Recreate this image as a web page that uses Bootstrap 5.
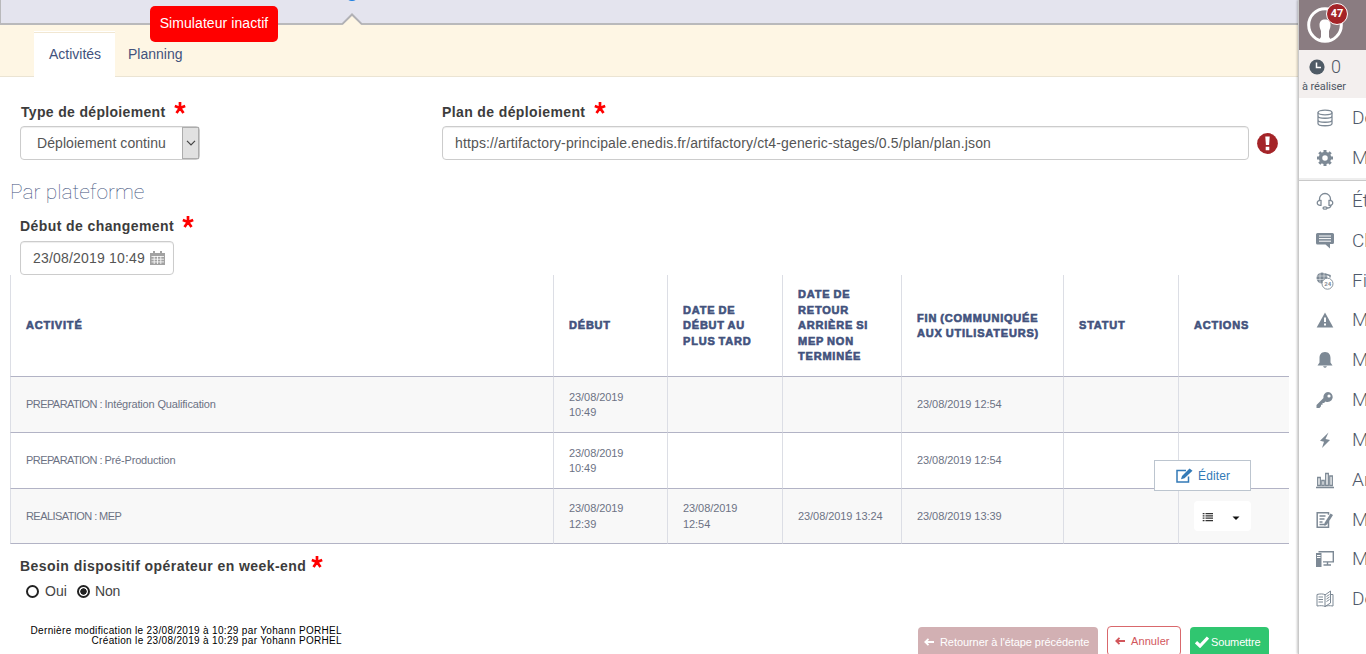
<!DOCTYPE html>
<html lang="fr">
<head>
<meta charset="utf-8">
<title>Activités</title>
<meta name="viewport" content="width=device-width, initial-scale=1">
<link href="https://cdn.jsdelivr.net/npm/bootstrap@5.3.0/dist/css/bootstrap.min.css" rel="stylesheet">
<style>
body{font-family:"Liberation Sans",Arial,sans-serif;font-size:14px;line-height:20px;color:#444;height:654px;background:#fff}
.main-pane{width:1298px;height:654px}
.top-strip{height:25px;background:#e4e4ee;border-left:1px solid #b9b9bb;border-bottom:2px solid #b9b9bb}
.step-arrow{left:342px;top:12px}
.step-dot{left:345px;top:-13px;width:14px;height:14px;background:#1a7de0}
.sim-badge{left:150px;top:6px;width:128px;height:36px;line-height:35px;background:#f00;color:#fff;border-radius:5px;letter-spacing:.07px;z-index:3}
.tab-band{height:52px;background:#fef6e4;border-bottom:1px solid #ebe4d3;padding:6px 0 0 34px}
.tab-band .nav-link{color:#42527d;padding:13px 13px 0;height:46px;border:0;border-radius:0;line-height:20px}
.tab-band .nav-link.active{background:#fff;padding:12px 15px 0;width:81px;border-top:1px solid #fff;box-shadow:inset 0 1px #f1e7d2}
.field-label{font-weight:700;color:#3c3c3c;line-height:20px;height:24px;white-space:nowrap}
.field-label svg{vertical-align:top}
.field-label path{stroke:red;stroke-width:2.7}
.box{height:34px;border:1px solid #ccc;border-radius:4px;box-shadow:inset 0 1px 1px rgba(0,0,0,.07);background:#fff;color:#555;line-height:32px;white-space:nowrap}
.select-btn{width:17px;background:#e1e1e1;border:1px solid #adadad}
.section-title{font-family:Roboto,sans-serif;font-weight:100;font-size:21px;line-height:24px;color:#42527d;margin:0}
.act-table{width:1279px;margin:0 0 0 10px;table-layout:fixed;border-collapse:separate;border-spacing:0;font-size:11px;line-height:15.4px;color:#6c7284}
.act-table th,.act-table td{padding:0 8px 0 15px;vertical-align:middle;border-left:1px solid #dcdee5;border-bottom:1px solid #b2b3c5}
.act-table th{height:102px;padding-top:1px;color:#42527d;font-weight:700;letter-spacing:.8px;word-spacing:-.8px;-webkit-text-stroke:.6px #42527d}
.act-table td{height:56px;letter-spacing:-.07px}
.act-table td:first-child{letter-spacing:-.17px}
.act-table .phase{letter-spacing:-.57px}
.act-table td:nth-child(2){padding-top:1px}
.act-table tr:last-child td{height:55px;padding-top:1px}
.act-table tbody tr:nth-child(odd){background:#f8f8f8}
.action-btn{width:57px;height:30px;background:#fff;border-radius:4px}
.edit-menu{right:47px;bottom:53px;width:97px;height:31px;background:#fff;border:1px solid #bcc5cf;color:#337ab7;font-size:12px}
.radio-dot{width:13px;height:13px;border:2px solid #222;border-radius:50%;display:inline-block}
.radio-dot.on{background:radial-gradient(circle,#222 0 2.9px,#fff 3.5px)}
.history{font-size:10px;line-height:10px;color:#000;width:342px;letter-spacing:.33px}
.foot-btn{height:30px;border-radius:4px;font-size:11px;line-height:28px;white-space:nowrap}
.side-pane{width:68px;height:654px;border-left:1px solid #c9c9c9;box-shadow:-1px 0 2px rgba(0,0,0,.22);font-family:Roboto,sans-serif;background:#fff;z-index:4}
.avatar-zone{height:50px;background:#8a7c81}
.counter{left:27px;top:3px;width:22px;height:22px;border:1.5px solid #fff;background:#a42428;color:#fff;font-size:11px;font-weight:700;line-height:19px}
.todo-zone{height:48px;background:#f3efee;color:#4f5865}
.side-item{height:40px;padding-left:17px;color:#505a6b;font-weight:300;font-size:19px;line-height:40px;white-space:nowrap}
.side-item svg{width:18px;height:18px;margin-right:18px;flex:none;fill:#7d8995;stroke:none}
.side-item .ln{fill:none;stroke:#7d8995}
.side-rule{height:3px;background:#eee;border-bottom:1px solid #c9c9c9}
</style>
</head>
<body class="overflow-hidden">
<div class="d-flex">
<main class="main-pane position-relative flex-shrink-0 overflow-hidden">
  <div class="top-strip"></div>
  <span class="step-dot rounded-circle position-absolute"></span>
  <svg class="step-arrow position-absolute" width="20" height="14"><path d="M0 13 L10 2.5 L20 13V14H0Z" fill="#fef6e4"/><path d="M0 12.3 L10 2.5 L20 12.3" fill="none" stroke="#b1b1b5" stroke-width="2"/></svg>
  <div class="sim-badge position-absolute text-center">Simulateur inactif</div>
  <nav class="tab-band nav flex-nowrap">
    <a class="nav-link active">Activités</a>
    <a class="nav-link">Planning</a>
  </nav>

  <div class="d-flex" style="padding:25px 0 0 20px">
    <div style="width:422px">
      <div class="field-label" style="letter-spacing:.33px;padding-left:1px">Type de déploiement <svg width="12" height="13" viewBox="0 0 12 13" style="margin-left:4px"><path d="M6 0V6M6 6L.8 4M6 6L11.2 4M6 6L2.5 11M6 6L9.5 11"/></svg></div>
      <div class="box d-flex" style="width:180px;padding-left:16px">
        <span class="flex-grow-1" style="letter-spacing:.07px">Déploiement continu</span>
        <span class="select-btn d-flex align-items-center justify-content-center"><svg width="10" height="6"><path d="M1 .8L5 4.8L9 .8" fill="none" stroke="#444" stroke-width="1.2"/></svg></span>
      </div>
    </div>
    <div>
      <div class="field-label" style="letter-spacing:.38px">Plan de déploiement <svg width="12" height="13" viewBox="0 0 12 13" style="margin-left:4px"><path d="M6 0V6M6 6L.8 4M6 6L11.2 4M6 6L2.5 11M6 6L9.5 11"/></svg></div>
      <div class="d-flex align-items-center">
        <div class="box" style="width:807px;padding-left:12px;letter-spacing:.137px">https://artifactory-principale.enedis.fr/artifactory/ct4-generic-stages/0.5/plan/plan.json</div>
        <svg width="21" height="21" viewBox="0 0 21 21" style="margin-left:8px"><circle cx="10.5" cy="10.5" r="10.4" fill="#a42428"/><path d="M8.3 3.5h4.4l-.6 8.5H8.9zM8.7 13.8h3.6v3.4H8.7z" fill="#fff"/></svg>
      </div>
    </div>
  </div>

  <h2 class="section-title" style="padding:20px 0 12px 10px">Par plateforme</h2>
  <div style="padding-left:20px">
    <div class="field-label" style="height:25px;letter-spacing:.41px">Début de changement <svg width="12" height="13" viewBox="0 0 12 13" style="margin-left:4px"><path d="M6 0V6M6 6L.8 4M6 6L11.2 4M6 6L2.5 11M6 6L9.5 11"/></svg></div>
    <div class="box d-flex align-items-center" style="width:154px;padding-left:12px"><span style="letter-spacing:.19px">23/08/2019 10:49</span>
      <svg width="15" height="14" viewBox="0 0 15 14" style="margin-left:5px;margin-bottom:1px"><path d="M0 2h15v12H0zM3 0h2v3H3zM10 0h2v3h-2z" fill="#a2a2a2"/><path d="M1.5 5.5H14M1.5 8.2H14M1.5 10.9H14M4.2 5v8M7.5 5v8M10.8 5v8" stroke="#fff" stroke-width=".8"/></svg>
    </div>
  </div>

  <div class="position-relative">
    <table class="act-table">
      <colgroup><col style="width:543px"><col style="width:114px"><col style="width:115px"><col style="width:119px"><col style="width:162px"><col style="width:115px"><col style="width:111px"></colgroup>
      <thead><tr><th>ACTIVITÉ</th><th>DÉBUT</th><th>DATE DE<br>DÉBUT AU<br>PLUS TARD</th><th>DATE DE<br>RETOUR<br>ARRIÈRE SI<br>MEP NON<br>TERMINÉE</th><th>FIN (COMMUNIQUÉE<br>AUX UTILISATEURS)</th><th>STATUT</th><th>ACTIONS</th></tr></thead>
      <tbody>
        <tr><td><span class="phase">PREPARATION : </span>Intégration Qualification</td><td>23/08/2019<br>10:49</td><td></td><td></td><td>23/08/2019 12:54</td><td></td><td></td></tr>
        <tr><td><span class="phase">PREPARATION : </span>Pré-Production</td><td>23/08/2019<br>10:49</td><td></td><td></td><td>23/08/2019 12:54</td><td></td><td></td></tr>
        <tr><td><span class="phase">REALISATION : MEP</span></td><td>23/08/2019<br>12:39</td><td>23/08/2019<br>12:54</td><td>23/08/2019 13:24</td><td>23/08/2019 13:39</td><td></td>
          <td class="pt-0"><div class="action-btn"><svg class="d-block" width="57" height="30"><path d="M11.5 12.500h7.500M11.500 14.800h7.500M11.500 17.200h7.500M11.500 19.500h7.500M8.700 12.500h1.800M8.700 14.800h1.800M8.700 17.200h1.800M8.700 19.500h1.800" stroke="#333" stroke-width="1.250"/><path d="M38.500 15.500h7l-3.500 3.500z" fill="#111"/></svg></div></td></tr>
      </tbody>
    </table>
    <div class="edit-menu position-absolute d-flex align-items-center" style="padding-left:21px">
      <svg width="17" height="15" viewBox="0 0 17 15"><path d="M12.500 8.500V14H1V2.500H10" fill="none" stroke="#337ab7" stroke-width="1.500"/><path d="M5 11.200L6 8L13.500.5L16.500 2.800L8.500 10.300Z" fill="#337ab7"/></svg>
      <span style="margin-left:5px;letter-spacing:.15px">Éditer</span>
    </div>
  </div>

  <div style="padding:12px 0 0 20px">
    <div class="field-label" style="height:25px;letter-spacing:.44px">Besoin dispositif opérateur en week-end <svg width="12" height="13" viewBox="0 0 12 13"><path d="M6 0V6M6 6L.8 4M6 6L11.2 4M6 6L2.5 11M6 6L9.5 11"/></svg></div>
    <div class="d-flex align-items-center" style="padding-left:6px;height:20px">
      <span class="radio-dot"></span><span style="margin-left:6px;width:32px">Oui</span>
      <span class="radio-dot on"></span><span style="margin-left:5px;letter-spacing:-.2px">Non</span>
    </div>
  </div>

  <div class="d-flex" style="padding-top:25px">
    <div class="history text-end">Dernière modification le 23/08/2019 à 10:29 par Yohann PORHEL<br>Création le 23/08/2019 à 10:29 par Yohann PORHEL</div>
    <div class="d-flex" style="margin-left:576px">
      <div class="foot-btn d-flex align-items-center" style="width:180px;background:#d2b0b3;color:#fff;padding-left:6px;margin-top:1px"><svg width="10" height="8"><path d="M10 4H1.5M4.500 .8L1.300 4l3.200 3.200" fill="none" stroke="#fff" stroke-width="1.800"/></svg><span style="margin-left:6px;letter-spacing:-.07px">Retourner à l'étape précédente</span></div>
      <div class="foot-btn d-flex align-items-center" style="width:74px;border:1px solid #d9686c;color:#d2565b;padding-left:7px;margin-left:9px"><svg width="10" height="8"><path d="M10 4H1.500M4.500 .8L1.300 4l3.200 3.200" fill="none" stroke="#d2565b" stroke-width="1.800"/></svg><span style="margin-left:6px;letter-spacing:.1px">Annuler</span></div>
      <div class="foot-btn d-flex align-items-center" style="width:79px;background:#30c670;color:#fff;padding-left:5px;margin:1px 0 0 9px"><svg width="14" height="12"><path d="M1 6.200L5 10L13 1.500" fill="none" stroke="#fff" stroke-width="3.200"/></svg><span style="margin-left:2px;letter-spacing:-.15px">Soumettre</span></div>
    </div>
  </div>
</main>

<aside class="side-pane position-relative flex-shrink-0 overflow-hidden">
  <div class="avatar-zone position-relative">
    <svg width="50" height="48" class="d-block"><circle cx="26" cy="25" r="16.300" fill="none" stroke="#fff" stroke-width="3"/><path d="M20.500 25c0-3.500 2-5.500 5.500-5.500s5.500 2 5.500 5.500c0 3-1 4-1.500 6v6l2 3h-12l2-3v-6c-.5-2-1.500-3-1.500-6z" fill="#fff"/></svg>
    <span class="counter position-absolute rounded-circle text-center">47</span>
  </div>
  <div class="todo-zone">
    <div class="d-flex align-items-center" style="height:28px;padding:6px 0 0 10px"><svg width="16" height="16"><circle cx="8" cy="8" r="7.600" fill="#4f5b66"/><path d="M7.500 3.500V8.500H12" fill="none" stroke="#fff" stroke-width="1.500"/></svg><span style="font-size:18px;font-weight:300;margin-left:6px">0</span></div>
    <div style="font-size:11px;line-height:17px;padding-left:3px;letter-spacing:-.08px">à réaliser</div>
  </div>
  <div class="side-item d-flex align-items-center"><svg viewBox="0 0 18 18"><g class="ln" stroke-width="1.300"><ellipse cx="9" cy="3.500" rx="7" ry="2.300"/><path d="M2 3.500v11c0 3 14 3 14 0v-11M2 7c0 3 14 3 14 0M2 11c0 3 14 3 14 0"/></g></svg>Demandes</div>
  <div class="side-item d-flex align-items-center"><svg viewBox="0 0 18 18"><circle class="ln" cx="9" cy="9" r="4.500" stroke-width="3.500"/><path class="ln" stroke-width="3" d="M9 1v2.500M9 14.500V17M1 9h2.500M14.500 9H17M3.300 3.300l1.700 1.700M13 13l1.700 1.700M3.300 14.700L5 13M13 5l1.700-1.700"/></svg>Mes</div>
  <div class="side-rule"></div>
  <div class="side-item d-flex align-items-center"><svg viewBox="0 0 18 18"><path class="ln" stroke-width="1.300" d="M3.500 9V7a5.500 5.500 0 0 1 11 0v2M15 13c0 2-1.500 3-4 3"/><path class="ln" stroke-width="1.300" d="M5 8.500v4.800c-5 .8-5-5.600 0-4.800zM13 8.500v4.800c5 .8 5-5.600 0-4.800z"/><ellipse class="ln" cx="9" cy="16" rx="2" ry="1.200" stroke-width="1.300"/></svg>États</div>
  <div class="side-item d-flex align-items-center"><svg viewBox="0 0 18 18"><path d="M1.500 1h15q1.500 0 1.500 1.500v8q0 1.500-1.500 1.500H14v4.500L9.500 12.500h-8Q0 12.500 0 11v-8.500Q0 1 1.500 1z"/><path d="M3 4h12M3 6.600h12M3 9.200h12" stroke="#fff" stroke-width="1"/></svg>Chat</div>
  <div class="side-item d-flex align-items-center" style="height:39px"><svg viewBox="0 0 18 18"><circle cx="6" cy="6" r="5.500"/><path d="M0 4h12M0 7.500h12M4 0v12M8 0v12" stroke="#fff" stroke-width=".5"/><path d="M9 2l5 1.500v2" class="ln" stroke-width="1.500"/><circle cx="11.500" cy="11.700" r="5.500" fill="#fff" stroke="#89949e"/><text x="8.200" y="13.900" font-size="6" font-weight="700">24</text></svg>File</div>
  <div class="side-item d-flex align-items-center"><svg viewBox="0 0 18 18"><path d="M9 1.500L17.300 16.500H.7z"/><path d="M9 6.500v4.500M9 12.500v2" stroke="#fff" stroke-width="2"/></svg>Mes</div>
  <div class="side-item d-flex align-items-center"><svg viewBox="0 0 18 18"><path d="M9 1c4 0 5.500 3 5.500 6v4.500l2 3h-15l2-3V7c0-3 1.500-6 5.500-6zM7 15.200h4q-2 3-4 0z"/></svg>Mes</div>
  <div class="side-item d-flex align-items-center"><svg viewBox="0 0 18 18"><path d="M12 1a5 5 0 1 1-2.500 9.500L8 12H6.500v1.700H5v1.600L3.500 17H.5v-3L7.500 7A5 5 0 0 1 12 1z"/><circle cx="13" cy="5" r="1.600" fill="#fff"/></svg>Mes</div>
  <div class="side-item d-flex align-items-center"><svg viewBox="0 0 18 18"><path d="M12.500 1.500L4 9.800l4 1L6 17l8-8-4.500-1z"/></svg>Mes</div>
  <div class="side-item d-flex align-items-center"><svg viewBox="0 0 18 18"><path class="ln" stroke-width="1.300" d="M0 16.500h18M1.700 14.500v-8h2.600v8zM5.800 14.500v-5h2.400v5zM9.700 14.500v-12h2.600v12zM13.800 14.500V5h2.500v9.500z"/></svg>Analyse</div>
  <div class="side-item d-flex align-items-center" style="height:39px"><svg viewBox="0 0 18 18"><path class="ln" stroke-width="1.500" d="M12.500 10v6.200H1.200V1.800h11.300v2M3.500 5h6M3.500 8h5M3.500 11h3M3.500 13.500h6"/><path d="M14.500 2.500l2.500 1.500-6 9.500-2.500 1.500V12z"/></svg>Mes</div>
  <div class="side-item d-flex align-items-center"><svg viewBox="0 0 18 18"><path d="M0 3h5.500v14H0z"/><path d="M1 5.500h3.500M1 7.500h3.500" stroke="#fff"/><path class="ln" stroke-width="1.400" d="M2.500 1.700h14.800v10.200H7M11.500 12v2.500M7.500 15h7.500"/></svg>Mes</div>
  <div class="side-item d-flex align-items-center"><svg viewBox="0 0 18 18"><path class="ln" stroke-width="1" d="M9 4v12.500c-2-1-4-1-8-.5V4.500c3-.8 6-.8 8 .2M9 16.500c2-1 4-1 8-.5V4.500h-2M9 5l5.500-4v12L9 16.500M2.500 7H7M2.500 9.500H7M2.500 12H7M10.500 6.500l3-2M10.500 9l3-2M10.500 11.500l3-2"/></svg>Documents</div>
</aside>
</div>
<script src="https://cdn.jsdelivr.net/npm/bootstrap@5.3.0/dist/js/bootstrap.bundle.min.js"></script>
</body>
</html>
